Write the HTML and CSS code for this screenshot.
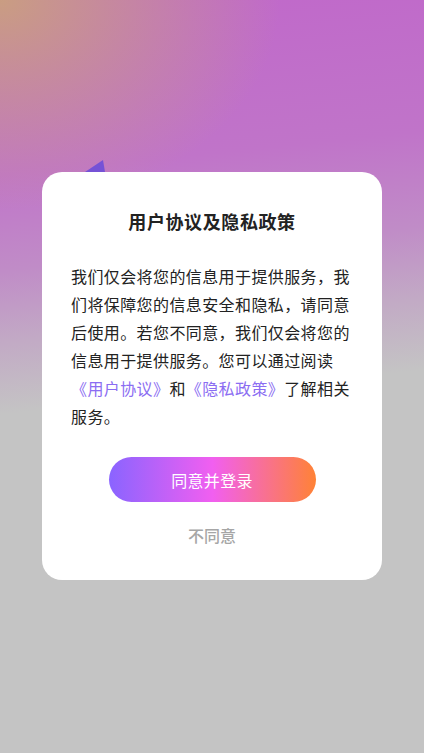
FILE: index.html
```html
<!DOCTYPE html>
<html lang="zh-CN">
<head>
    <meta charset="UTF-8">
    <meta name="viewport" content="width=device-width, initial-scale=1.0">
    <title>用户协议及隐私政策</title>
    <link rel="stylesheet" href="styles.css">
</head>
<body>
    <div class="page">
        <svg class="deco" width="30" height="24" viewBox="0 0 30 24">
            <polygon points="0,14 21,0 25,24 0,24" fill="#7552d6"/>
        </svg>

        <div class="card">
            <h2 class="title">用户协议及隐私政策</h2>
            <p class="content">我们仅会将您的信息用于提供服务，我们将保障您的信息安全和隐私，请同意后使用。若您不同意，我们仅会将您的信息用于提供服务。您可以通过阅读<a href="#" class="link">《用户协议》</a>和<a href="#" class="link">《隐私政策》</a>了解相关服务。</p>
            <button type="button" class="btn-agree">同意并登录</button>
            <div class="btn-refuse">不同意</div>
        </div>
    </div>
</body>
</html>
```

FILE: styles.css
```css
body {
    margin: 0;
    padding: 0;
    font-family: "Noto Sans CJK SC", "Noto Sans", sans-serif;
    background-color: #c4c4c4;
}
.page {
    position: relative;
    min-height: 100vh;
    padding-top: 172px;
    box-sizing: border-box;
    background:
        radial-gradient(ellipse 280px 210px at 0 0, rgba(202, 160, 126, 0.95), rgba(202, 160, 126, 0) 100%),
        linear-gradient(174deg, #c068ca 0%, #c074c9 22%, #c08cc7 34%, #c2aac5 43%, #c4c4c4 52%, #c4c4c4 100%);
}
.deco {
    position: absolute;
    left: 82px;
    top: 160px;
}
.card {
    position: relative;
    width: 340px;
    margin: 0 auto;
    padding: 37px 29px 34px;
    box-sizing: border-box;
    background: #ffffff;
    border-radius: 20px;
    text-align: center;
}
.title {
    margin: 0;
    font-size: 18px;
    line-height: 24px;
    font-weight: bold;
    letter-spacing: 0.6px;
    color: #222222;
}
.content {
    margin: 29px 0 0;
    font-size: 16px;
    line-height: 28px;
    letter-spacing: 0.4px;
    color: #222222;
    text-align: left;
}
.link {
    color: #8b6df2;
    text-decoration: none;
}
.btn-agree {
    display: block;
    width: 207px;
    height: 45px;
    margin: 27px auto 0;
    border: none;
    border-radius: 23px;
    background: linear-gradient(90deg, #8a64ff 0%, #f15ff0 50%, #ff8236 100%);
    color: #ffffff;
    font-family: inherit;
    font-size: 16px;
    letter-spacing: 0.3px;
    cursor: pointer;
}
.btn-refuse {
    margin-top: 22px;
    font-size: 16px;
    line-height: 22px;
    font-weight: 500;
    color: #a6a6a6;
}
```
